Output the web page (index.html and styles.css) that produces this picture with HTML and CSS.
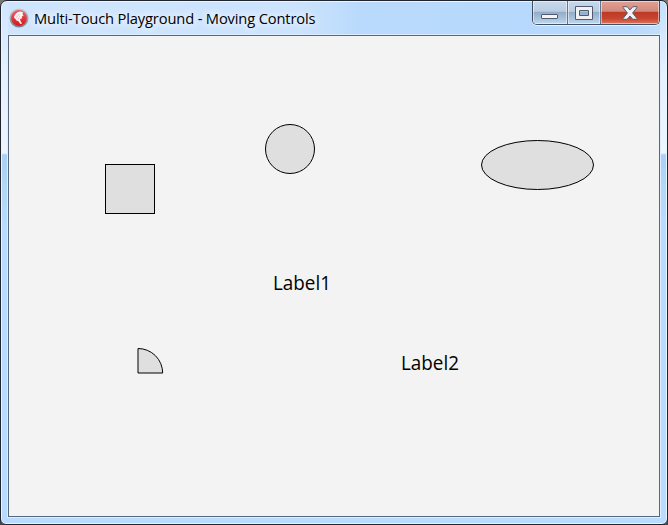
FILE: index.html
```
<!DOCTYPE html>
<html lang="en">
<head>
<meta charset="utf-8">
<title>Multi-Touch Playground - Moving Controls</title>
<link rel="stylesheet" href="styles.css">
</head>
<body>
<div class="window">
  <header class="titlebar">
    <svg class="app-icon" width="20" height="20" viewBox="0 0 20 20" aria-hidden="true">
      <defs>
        <linearGradient id="ring" x1="0" y1="0" x2="0" y2="1"><stop offset="0" stop-color="#c8cace"/><stop offset="1" stop-color="#7c7e83"/></linearGradient>
        <linearGradient id="red" x1="0" y1="0" x2="0" y2="1"><stop offset="0" stop-color="#e8616a"/><stop offset="1" stop-color="#d8141c"/></linearGradient>
      </defs>
      <circle cx="10" cy="10" r="9.5" fill="url(#ring)"/>
      <circle cx="10" cy="10" r="7.9" fill="url(#red)"/>
      <path d="M5 9.800C5.300 6.500 8 4 11.200 3.600l2.800.5-.4 1.800.9 1.800-1.500.6-.1 2.200-1.900.6.6 2.100 1.500 2.400-1.800.4-2-3-1.600-.3L6.500 11z" fill="#fff3f3"/>
      <path d="M7 9.700 10.800 6M9.200 11.600l1.200-3" stroke="#e99a9e" stroke-width=".7" fill="none"/>
    </svg>
    <h1 class="title">Multi-Touch Playground - Moving Controls</h1>
    <div class="caption-buttons">
      <button class="caption minimize" aria-label="Minimize">
        <svg width="18" height="6" viewBox="0 0 18 6"><rect x=".5" y=".5" width="16" height="4" rx=".5" fill="#f5f5f6" stroke="#515b70"/></svg>
      </button>
      <button class="caption maximize" aria-label="Maximize">
        <svg width="18" height="14" viewBox="0 0 18 14"><path fill-rule="evenodd" d="M.5.5h17v13H.5zM4.500 4.500h9v5h-9z" fill="#f1f1f3" stroke="#515b70"/></svg>
      </button>
      <button class="caption close" aria-label="Close">
        <svg width="16" height="14" viewBox="0 0 16 14"><path d="M1 .7h4.200L8 4 10.800.7H15v.8L10.600 7l4.400 5.500v.8h-4.200L8 10l-2.800 3.300H1v-.8L5.400 7 1 1.500z" fill="#f2f2f4" stroke="#555b70" stroke-linejoin="round"/></svg>
      </button>
    </div>
  </header>
  <main class="client">
    <svg class="canvas" width="650" height="480" viewBox="9 36 650 480">
      <g class="shapes">
        <rect x="105.500" y="164.500" width="49" height="49"/>
        <circle cx="290" cy="149" r="24.500"/>
        <ellipse cx="537.500" cy="165" rx="56" ry="24.500"/>
        <path d="M138 348.500A24.700 24.700 0 0 1 162.700 373H138z"/>
      </g>
      <g class="labels">
        <text x="273" y="290" textLength="58" lengthAdjust="spacingAndGlyphs">Label1</text>
        <text x="401" y="370" textLength="58" lengthAdjust="spacingAndGlyphs">Label2</text>
      </g>
    </svg>
  </main>
</div>
</body>
</html>
```
FILE: styles.css
```
* { box-sizing: border-box; }

body {
  margin: 0;
  background: linear-gradient(#777, #444);
  font-family: "Open Sans", "Noto Sans", sans-serif;
  overflow: hidden;
}

.window {
  display: flex;
  flex-direction: column;
  width: 668px;
  height: 525px;
  padding: 0 7px 7px;
  border: 1px solid #20242d;
  border-radius: 7px 7px 6px 6px;
  box-shadow: inset 0 0 0 1px #e9f5ff;
  background:
    linear-gradient(#b9dbff, #b9dbff) 0 100% / 100% 8px no-repeat,
    linear-gradient(#d0e5fd 0, #e6f1fe 75px, #edf5fe 152px, #a9d0f7 154px, #b1d8f4 185px, #b9dbff 225px, #b9dbff 100%) 0 0 / 7px 100% no-repeat,
    linear-gradient(#c4e0fd 0, #e6f1fe 75px, #edf5fe 152px, #a9d0f7 154px, #b1d8f4 185px, #b9dbff 225px, #b9dbff 100%) 100% 0 / 7px 100% no-repeat,
    linear-gradient(90deg, #d0e5fd 0, #cbe3fd 45%, #b9dafc 54%, #b5d8fc 94%, #c4e0fd 100%);
}

.titlebar {
  display: flex;
  flex: 0 0 34px;
  align-items: flex-start;
}

.app-icon { flex: none; margin: 7px 0 0 1px; }

.title {
  flex: none;
  width: 283px;
  margin: 7px 0 0 5px;
  font-size: 14.7px;
  font-weight: 400;
  line-height: 20px;
  letter-spacing: -.15px;
  white-space: nowrap;
  color: #000;
  text-shadow: 0 0 9px #fff, 0 0 9px #fff;
}

.caption-buttons {
  display: flex;
  width: 128px;
  height: 24px;
  margin-left: auto;
  border: 1px solid #414f65;
  border-top: 0;
  border-radius: 0 0 5px 5px;
  overflow: hidden;
  box-shadow: 0 1px 0 #e7f3ff;
}

.caption {
  display: flex;
  align-items: center;
  justify-content: center;
  padding: 0;
  border: 0;
  border-right: 1px solid #64768d;
  box-shadow: inset 0 0 0 1px #ffffff80;
  background: linear-gradient(#c7d9ec 0, #b9cce1 45%, #92abc6 48%, #aac5df 80%, #c2daee 100%);
}

.minimize { width: 35px; padding-top: 9px; }
.maximize { width: 33px; }

.close {
  flex: 1;
  border: 0;
  background: linear-gradient(#e1a194 0, #d18a7c 45%, #bd3924 48%, #c8442d 76%, #da7860 100%);
}

.client {
  width: 652px;
  height: 482px;
  border: 1px solid #56687d;
  background: #f3f3f3;
  box-shadow: 0 0 0 1px #dceeff;
}

.canvas { display: block; }
.shapes { fill: #dfdfdf; stroke: #000; stroke-width: 1; }
.labels { font-size: 19.5px; fill: #000; }
```
